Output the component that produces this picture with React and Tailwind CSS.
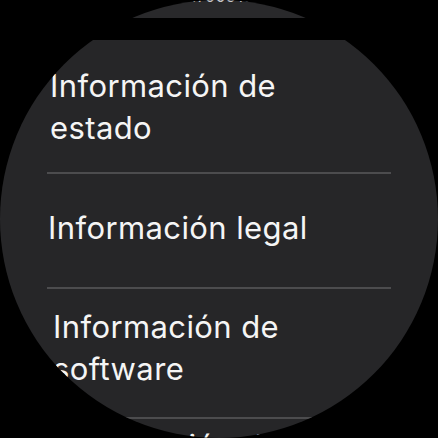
// Wear OS style "Información" list, clipped by the round watch face.
const items = [
  { id: 'estado', label: 'Información de estado', pad: 'pt-[25px] pb-[23px] pl-[3px]' },
  { id: 'legal', label: 'Información legal', pad: 'pt-[33px] pb-[38px] pl-[1px]' },
  { id: 'software', label: 'Información de software', pad: 'pt-[17px] pb-[27px] pl-[6px]' },
  { id: 'bateria', label: 'Información de la batería', pad: 'pt-[6px] pb-[30px] pl-[8px]' },
]

export default function App() {
  return (
    <div className="h-[438px] w-[438px] overflow-hidden bg-black">
      <div
        className="flex h-[438px] w-[438px] flex-col overflow-hidden rounded-full bg-black"
        style={{ fontFamily: 'Inter, "Open Sans", sans-serif' }}
      >
        {/* previous row, mostly scrolled away */}
        <div className="mx-[90px] -mt-[30px] flex h-[48px] shrink-0 items-end justify-center rounded-[28px] bg-[#29292b] pb-[14px]">
          <span className="text-[16px] leading-[16px] tracking-[0.5px] text-[#c8c8ca]">
            R3AT0091993
          </span>
        </div>

        <div className="mt-[22px] shrink-0 bg-[#262628] px-[47px]">
          {items.map((item, i) => (
            <div key={item.id}>
              {i > 0 && <div className="h-[2px] bg-[#4c4c4e]" />}
              <div
                className={`w-[310px] text-[31px] leading-[42px] tracking-[0.4px] text-[#f5f5f5] ${item.pad}`}
              >
                {item.label}
              </div>
            </div>
          ))}
        </div>
      </div>
    </div>
  )
}
